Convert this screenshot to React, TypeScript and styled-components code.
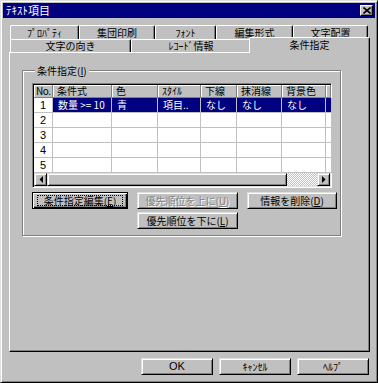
import React from "react";
import styled, { createGlobalStyle, css } from "styled-components";

const FACE = "#c0c0c0";
const SHADOW = "#808080";
const NAVY = "#000080";
const LINE = "#c0c0c0";

const GlobalStyle = createGlobalStyle`
  html, body {
    margin: 0;
    padding: 0;
    background: ${FACE};
  }
  body {
    font-family: "Noto Sans CJK JP", "DejaVu Sans", sans-serif;
    font-size: 10px;
    color: #000;
  }
`;

const Window = styled.div`
  width: 378px;
  height: 383px;
  box-sizing: border-box;
  background: ${FACE};
  border: 1px solid;
  border-color: #dfdfdf #000 #000 #dfdfdf;
  box-shadow: inset 1px 1px #fff, inset -1px -1px ${SHADOW};
  padding: 2px;
  display: flex;
  flex-direction: column;
`;

const TitleBar = styled.div`
  height: 15px;
  flex: none;
  background: ${NAVY};
  color: #fff;
  display: flex;
  align-items: center;
  justify-content: space-between;
  padding: 0 2px 0 3px;
`;

const TitleText = styled.span`
  font-size: 11px;
  line-height: 13px;
`;

const CloseButton = styled.div`
  width: 13px;
  height: 11px;
  box-sizing: border-box;
  background: ${FACE};
  border: 1px solid;
  border-color: #fff #000 #000 #fff;
  box-shadow: inset -1px -1px ${SHADOW};
  display: flex;
  align-items: center;
  justify-content: center;
`;

const Body = styled.div`
  flex: 1;
  display: flex;
  flex-direction: column;
  padding: 7px 5px 0 6px;
`;

const Tabs = styled.div`
  display: flex;
  flex-direction: column;
  padding: 0 2px 0 1px;
`;

const TabRow = styled.div`
  display: flex;
`;

const Tab = styled.div<{ $w: number; $active?: boolean; $h?: number }>`
  width: ${(p) => p.$w}px;
  height: ${(p) => p.$h ?? 14}px;
  box-sizing: border-box;
  flex: none;
  background: ${FACE};
  border-top: 1px solid #fff;
  border-left: 1px solid #fff;
  border-right: 1px solid #000;
  box-shadow: inset -1px 0 ${SHADOW};
  border-radius: 2px 2px 0 0;
  display: flex;
  align-items: center;
  justify-content: center;
  font-size: 10px;
  line-height: 12px;
  white-space: nowrap;
  ${(p) =>
    p.$active &&
    css`
      width: ${p.$w + 4}px;
      height: ${(p.$h ?? 14) + 3}px;
      margin: -2px -2px -1px;
      padding-bottom: 2px;
      position: relative;
      z-index: 1;
    `}
`;

const Panel = styled.div`
  height: 300px;
  flex: none;
  box-sizing: border-box;
  border: 1px solid;
  border-color: #fff #000 #000 #fff;
  box-shadow: inset -1px -1px ${SHADOW};
  display: flex;
  flex-direction: column;
  padding: 17px 0 0 12px;
`;

const GroupBox = styled.div`
  width: 319px;
  height: 166px;
  box-sizing: border-box;
  border: 1px solid ${SHADOW};
  box-shadow: inset 1px 1px #fff, 1px 1px #fff;
  display: flex;
  flex-direction: column;
  padding: 0 8px 0 9px;
`;

const Legend = styled.span`
  align-self: flex-start;
  margin: -7px 0 0 3px;
  padding: 0 2px;
  background: ${FACE};
  line-height: 13px;
  height: 13px;
  font-size: 10px;
`;

const GridFrame = styled.div`
  margin-top: 6px;
  width: 300px;
  height: 105px;
  box-sizing: border-box;
  border: 1px solid;
  border-color: ${SHADOW} #fff #fff ${SHADOW};
  box-shadow: inset 1px 1px #000, inset -1px -1px #dfdfdf;
  padding: 1px;
  background: #fff;
  display: flex;
  flex-direction: column;
`;

const Grid = styled.div`
  display: grid;
  grid-template-columns: 19px 59px 46px 43px 36px 45px 44px 4px;
  grid-template-rows: 13px repeat(5, 15px);
`;

const HeadCell = styled.div<{ $narrow?: boolean }>`
  box-sizing: border-box;
  background: ${FACE};
  border-right: 1px solid ${SHADOW};
  border-bottom: 1px solid ${SHADOW};
  box-shadow: inset 1px 1px #fff;
  padding-left: ${(p) => (p.$narrow ? 2 : 4)}px;
  display: flex;
  align-items: center;
  font-size: 10px;
  line-height: 12px;
  white-space: nowrap;
  letter-spacing: ${(p) => (p.$narrow ? "-0.5px" : "0")};
`;

const Cell = styled.div<{ $selected?: boolean }>`
  box-sizing: border-box;
  border-right: 1px solid ${LINE};
  border-bottom: 1px solid ${LINE};
  padding-left: 5px;
  display: flex;
  align-items: center;
  font-size: 10px;
  line-height: 12px;
  white-space: nowrap;
  background: ${(p) => (p.$selected ? NAVY : "#fff")};
  color: ${(p) => (p.$selected ? "#fff" : "#000")};
`;

const NumCell = styled(Cell)`
  font-size: 11px;
  font-family: "Liberation Sans", sans-serif;
  padding-left: 6px;
`;

const ScrollBar = styled.div`
  height: 13px;
  display: flex;
  background: ${FACE};
`;

const raised = css`
  box-sizing: border-box;
  background: ${FACE};
  border: 1px solid;
  border-color: #dfdfdf #000 #000 #dfdfdf;
  box-shadow: inset 1px 1px #fff, inset -1px -1px ${SHADOW};
`;

const ArrowButton = styled.div`
  ${raised};
  width: 13px;
  height: 13px;
  flex: none;
  display: flex;
  align-items: center;
  justify-content: center;
`;

const Thumb = styled.div`
  ${raised};
  width: 240px;
  flex: none;
`;

const Track = styled.div`
  flex: 1;
  background-color: #fff;
  background-image: repeating-conic-gradient(${FACE} 0 25%, #fff 0 50%);
  background-size: 2px 2px;
`;

const ButtonGrid = styled.div`
  margin-top: 4px;
  display: grid;
  grid-template-columns: 96px 101px 90px;
  grid-auto-rows: 17px;
  column-gap: 9px;
  row-gap: 3px;
`;

const Button = styled.button<{ $default?: boolean; $col?: number }>`
  ${raised};
  grid-column: ${(p) => p.$col ?? "auto"};
  height: 17px;
  padding: 0;
  margin: 0;
  font-family: inherit;
  font-size: 10px;
  line-height: 1;
  color: #000;
  display: flex;
  align-items: center;
  justify-content: center;
  white-space: nowrap;
  &:disabled {
    color: ${SHADOW};
    text-shadow: 1px 1px #fff;
  }
  ${(p) =>
    p.$default &&
    css`
      border-color: #000;
      box-shadow: inset 1px 1px #fff, inset -1px -1px #000, inset -2px -2px ${SHADOW};
    `}
`;

const FocusRing = styled.span`
  box-sizing: border-box;
  width: calc(100% - 8px);
  height: 11px;
  border: 1px dotted #000;
  display: flex;
  align-items: center;
  justify-content: center;
  line-height: 10px;
`;

const Footer = styled.div`
  margin-top: 6px;
  display: flex;
  justify-content: flex-end;
  gap: 6px;
  padding-right: 1px;
`;

const FooterButton = styled(Button)`
  width: 72px;
  font-size: 10px;
`;

const OkLabel = styled.span`
  font-family: "Liberation Sans", sans-serif;
  font-size: 11px;
`;

const Tri = ({ dir }: { dir: "left" | "right" }) => (
  <svg width="4" height="7" viewBox="0 0 4 7">
    <polygon points={dir === "left" ? "4,0 4,7 0.5,3.5" : "0,0 0,7 3.5,3.5"} fill="#000" />
  </svg>
);

const columns = ["No.", "条件式", "色", "ｽﾀｲﾙ", "下線", "抹消線", "背景色", ""];

const rows = [
  ["1", "数量 >= 10", "青", "項目..", "なし", "なし", "なし", ""],
  ["2", "", "", "", "", "", "", ""],
  ["3", "", "", "", "", "", "", ""],
  ["4", "", "", "", "", "", "", ""],
  ["5", "", "", "", "", "", "", ""],
];

const backTabs = [
  { label: "ﾌﾟﾛﾊﾟﾃｨ", w: 69 },
  { label: "集団印刷", w: 76 },
  { label: "ﾌｫﾝﾄ", w: 61 },
  { label: "編集形式", w: 77 },
  { label: "文字配置", w: 75 },
];

const frontTabs = [
  { label: "文字の向き", w: 121 },
  { label: "ﾚｺｰﾄﾞ情報", w: 120 },
  { label: "条件指定", w: 117, active: true },
];

export default function App() {
  return (
    <>
      <GlobalStyle />
      <Window>
        <TitleBar>
          <TitleText>ﾃｷｽﾄ項目</TitleText>
          <CloseButton>
            <svg width="8" height="7" viewBox="0 0 8 7">
              <path d="M0.5 0.5 L7.5 6.5 M7.5 0.5 L0.5 6.5" stroke="#000" strokeWidth="1.6" />
            </svg>
          </CloseButton>
        </TitleBar>
        <Body>
          <Tabs>
            <TabRow>
              {backTabs.map((t) => (
                <Tab key={t.label} $w={t.w}>
                  {t.label}
                </Tab>
              ))}
            </TabRow>
            <TabRow>
              {frontTabs.map((t) => (
                <Tab key={t.label} $w={t.w} $h={13} $active={t.active}>
                  {t.label}
                </Tab>
              ))}
            </TabRow>
          </Tabs>
          <Panel>
            <GroupBox>
              <Legend>
                条件指定(<u>I</u>)
              </Legend>
              <GridFrame>
                <Grid>
                  {columns.map((c, i) => (
                    <HeadCell key={i} $narrow={i === 0}>
                      {c}
                    </HeadCell>
                  ))}
                  {rows.map((r, ri) =>
                    r.map((v, ci) =>
                      ci === 0 ? (
                        <NumCell key={ri + "-" + ci}>{v}</NumCell>
                      ) : (
                        <Cell key={ri + "-" + ci} $selected={ri === 0}>
                          {v}
                        </Cell>
                      )
                    )
                  )}
                </Grid>
                <ScrollBar>
                  <ArrowButton>
                    <Tri dir="left" />
                  </ArrowButton>
                  <Thumb />
                  <Track />
                  <ArrowButton>
                    <Tri dir="right" />
                  </ArrowButton>
                </ScrollBar>
              </GridFrame>
              <ButtonGrid>
                <Button $default>
                  <FocusRing>
                    条件指定編集(<u>E</u>)
                  </FocusRing>
                </Button>
                <Button disabled>
                  優先順位を上に(<u>U</u>)
                </Button>
                <Button>
                  情報を削除(<u>D</u>)
                </Button>
                <Button $col={2}>
                  優先順位を下に(<u>L</u>)
                </Button>
              </ButtonGrid>
            </GroupBox>
          </Panel>
          <Footer>
            <FooterButton>
              <OkLabel>OK</OkLabel>
            </FooterButton>
            <FooterButton>ｷｬﾝｾﾙ</FooterButton>
            <FooterButton>ﾍﾙﾌﾟ</FooterButton>
          </Footer>
        </Body>
      </Window>
    </>
  );
}
